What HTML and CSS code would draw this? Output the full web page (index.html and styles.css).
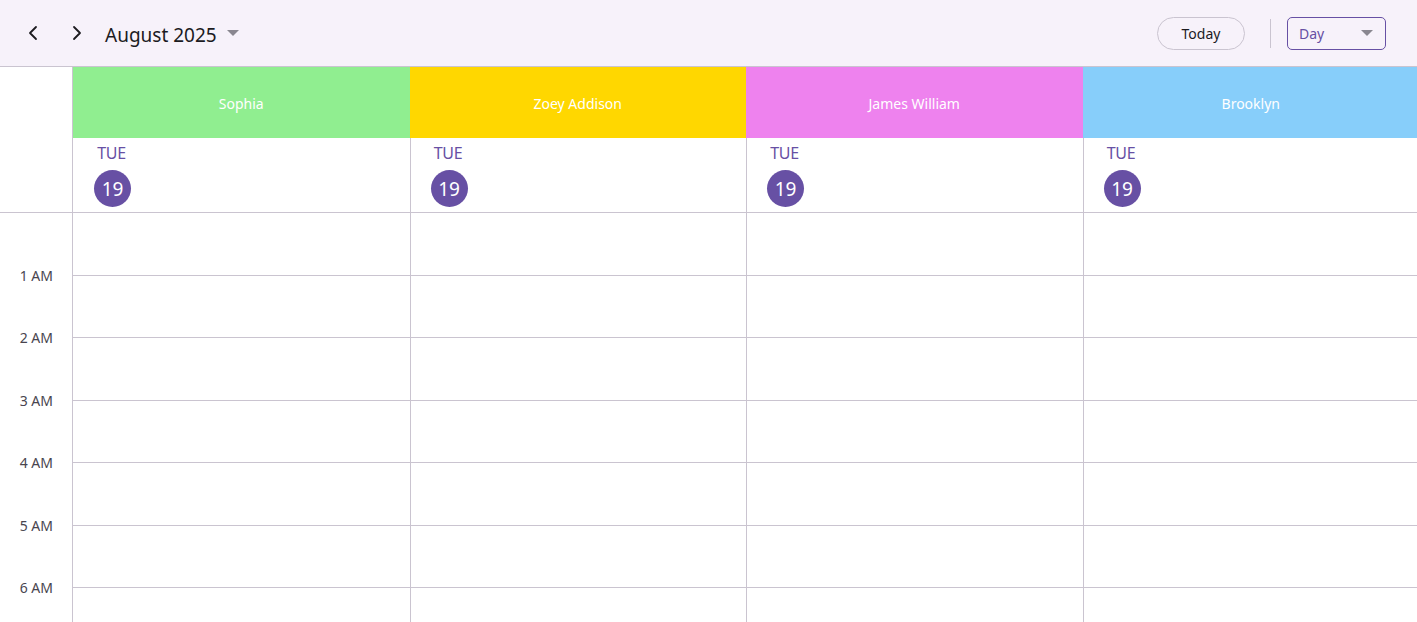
FILE: index.html
```html
<!DOCTYPE html>
<html>
<head>
<meta charset="utf-8">
<link rel="stylesheet" href="styles.css">
</head>
<body>
<div class="app">
  <header class="toolbar">
    <div class="nav">
      <button class="icon-btn" aria-label="Previous">
        <svg width="16" height="16" viewBox="0 0 16 16"><polyline points="11,2 5,8 11,14" fill="none" stroke="#1c1b1f" stroke-width="1.8" stroke-linecap="round" stroke-linejoin="round"/></svg>
      </button>
      <button class="icon-btn" aria-label="Next">
        <svg width="16" height="16" viewBox="0 0 16 16"><polyline points="5,2 11,8 5,14" fill="none" stroke="#1c1b1f" stroke-width="1.8" stroke-linecap="round" stroke-linejoin="round"/></svg>
      </button>
      <div class="title">August 2025 <span class="caret caret-gray"></span></div>
    </div>
    <div class="actions">
      <button class="today">Today</button>
      <span class="divider"></span>
      <div class="view-select"><span>Day</span><span class="caret caret-gray"></span></div>
    </div>
  </header>

  <div class="sched">
    <div class="head">
      <div class="corner"></div>
      <div class="day-col">
        <div class="res res-green">Sophia</div>
        <div class="date first"><div class="dow">TUE</div><div class="num">19</div></div>
      </div>
      <div class="day-col">
        <div class="res res-gold">Zoey Addison</div>
        <div class="date"><div class="dow">TUE</div><div class="num">19</div></div>
      </div>
      <div class="day-col">
        <div class="res res-violet">James William</div>
        <div class="date"><div class="dow">TUE</div><div class="num">19</div></div>
      </div>
      <div class="day-col">
        <div class="res res-blue">Brooklyn</div>
        <div class="date"><div class="dow">TUE</div><div class="num">19</div></div>
      </div>
    </div>

    <div class="body">
      <div class="times">
        <div class="time">1 AM</div>
        <div class="time">2 AM</div>
        <div class="time">3 AM</div>
        <div class="time">4 AM</div>
        <div class="time">5 AM</div>
        <div class="time">6 AM</div>
      </div>
      <div class="col first"><div class="slot"></div><div class="slot"></div><div class="slot"></div><div class="slot"></div><div class="slot"></div><div class="slot"></div><div class="slot"></div></div>
      <div class="col"><div class="slot"></div><div class="slot"></div><div class="slot"></div><div class="slot"></div><div class="slot"></div><div class="slot"></div><div class="slot"></div></div>
      <div class="col"><div class="slot"></div><div class="slot"></div><div class="slot"></div><div class="slot"></div><div class="slot"></div><div class="slot"></div><div class="slot"></div></div>
      <div class="col"><div class="slot"></div><div class="slot"></div><div class="slot"></div><div class="slot"></div><div class="slot"></div><div class="slot"></div><div class="slot"></div></div>
    </div>
  </div>
</div>
</body>
</html>
```

FILE: styles.css
```css
* { box-sizing: border-box; }
html, body { margin: 0; padding: 0; height: 100%; overflow: hidden; background: #fff; }
body { font-family: "Segoe UI", "Noto Sans", "Open Sans", sans-serif; color: #1c1b1f; }

.app { width: 1417px; height: 622px; overflow: hidden; }

.toolbar {
  height: 67px;
  background: #f7f2fa;
  border-bottom: 1px solid #cac4d0;
  display: flex;
  align-items: center;
  justify-content: space-between;
  padding: 0 31px 0 17px;
}
.nav { display: flex; align-items: center; }
.icon-btn {
  width: 32px; height: 32px;
  border: 0; background: transparent; padding: 0;
  display: flex; align-items: center; justify-content: center;
  margin-right: 12px;
}
.title {
  display: flex; align-items: center;
  font-size: 19px;
  color: #1c1b1f;
  margin-top: 3px;
  gap: 10px;
}
.title .caret { margin-top: -3px; }
.caret {
  display: inline-block;
  width: 0; height: 0;
  border-left: 6px solid transparent;
  border-right: 6px solid transparent;
  border-top: 6px solid #79747e;
}
.caret-gray { border-top-color: #8a8790; }

.actions { display: flex; align-items: center; }
.today {
  width: 88px; height: 33px;
  border: 1px solid #cac4d0;
  border-radius: 17px;
  background: transparent;
  font-family: inherit;
  font-size: 14px;
  color: #1c1b1f;
  padding: 0;
}
.divider { width: 1px; height: 29px; background: #cac4d0; margin: 0 16px 0 25px; }
.view-select {
  width: 99px; height: 33px;
  border: 1px solid #6750a4;
  border-radius: 5px;
  display: flex; align-items: center; justify-content: space-between;
  padding: 0 12px 0 11px;
  font-size: 14px;
  color: #6750a4;
}

.sched { width: 1421px; }
.head { display: flex; border-bottom: 1px solid #cac4d0; }
.corner { width: 73px; flex: none; border-right: 1px solid #cac4d0; }
.day-col { width: 336.5px; flex: none; display: flex; flex-direction: column; }
.res {
  height: 71px;
  display: flex; align-items: center; justify-content: center;
  color: #fff;
  font-size: 14px;
  padding-top: 2px;
}
.res-green { background: #90ee90; }
.res-gold { background: #ffd700; }
.res-violet { background: #ee82ee; }
.res-blue { background: #87cefa; }

.date {
  height: 74px;
  border-left: 1px solid #cac4d0;
  padding: 5px 0 0 20px;
  display: flex; flex-direction: column; align-items: flex-start;
}
.date.first { border-left: 0; padding-left: 21px; }
.dow {
  font-size: 16px;
  color: #6750a4;
  line-height: 20px;
  width: 38px;
  padding-right: 3px;
  text-align: center;
  letter-spacing: -0.3px;
}
.num {
  margin-top: 7px;
  width: 37px; height: 37px;
  border-radius: 50%;
  background: #6750a4;
  color: #fff;
  font-size: 19px;
  display: flex; align-items: center; justify-content: center;
}

.body { display: flex; }
.times {
  width: 73px; flex: none;
  border-right: 1px solid #cac4d0;
  padding-top: 31px;
}
.time {
  height: 62.5px;
  display: flex; align-items: center; justify-content: flex-end;
  padding-right: 19px;
  font-size: 14px;
  color: #49454f;
}
.col { width: 336.5px; flex: none; border-left: 1px solid #cac4d0; }
.col.first { border-left: 0; }
.slot { height: 62.5px; border-bottom: 1px solid #cac4d0; }
```
